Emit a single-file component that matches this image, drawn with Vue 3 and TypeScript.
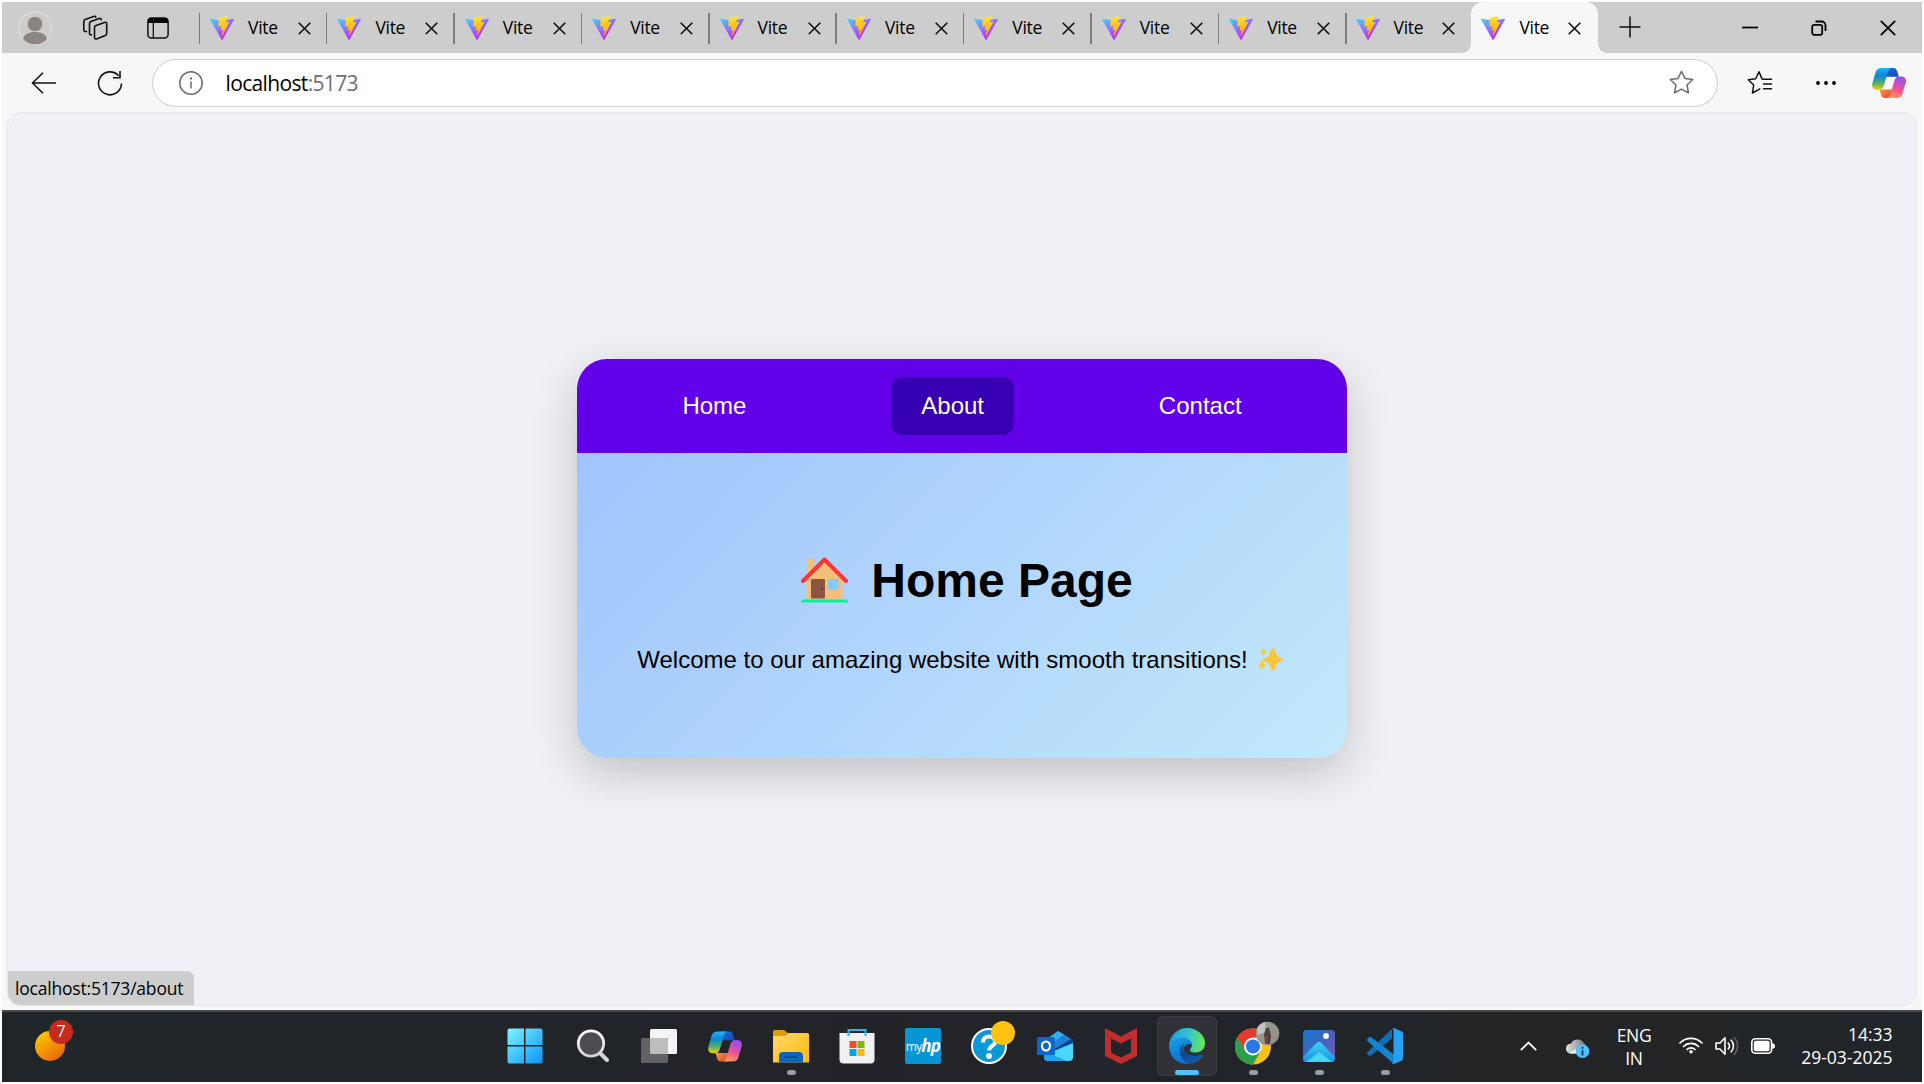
<script setup lang="ts">
interface NavItem {
  label: string
  active: boolean
}

const tabs: number[] = Array.from({ length: 11 }, (_, i) => i)
const activeTab = 10

const navItems: NavItem[] = [
  { label: 'Home', active: false },
  { label: 'About', active: true },
  { label: 'Contact', active: false },
]
</script>

<template>
  <div class="screen">
    <svg class="defs" width="0" height="0" aria-hidden="true">
      <defs>
        <linearGradient id="viteA" x1="-.8%" x2="57.6%" y1="7.6%" y2="78.4%">
          <stop offset="0" stop-color="#41d1ff" /><stop offset="1" stop-color="#bd34fe" />
        </linearGradient>
        <linearGradient id="viteB" x1="43.4%" x2="50.3%" y1="2.2%" y2="89%">
          <stop offset="0" stop-color="#ffea83" /><stop offset=".083" stop-color="#ffdd35" /><stop offset="1" stop-color="#ffa800" />
        </linearGradient>
        <linearGradient id="copA" x1="0" y1="0" x2="0" y2="1">
          <stop offset="0" stop-color="#20b4f2" /><stop offset=".35" stop-color="#0d86dc" /><stop offset=".68" stop-color="#4fae6b" /><stop offset="1" stop-color="#f3cf12" />
        </linearGradient>
        <linearGradient id="copB" x1=".3" y1="0" x2="0" y2="1">
          <stop offset="0" stop-color="#a14bea" /><stop offset=".5" stop-color="#ee5590" /><stop offset="1" stop-color="#ffab50" />
        </linearGradient>
        <linearGradient id="copC" x1="0" y1="0" x2="1" y2="1">
          <stop offset="0" stop-color="#1377dc" /><stop offset="1" stop-color="#1a3fb8" />
        </linearGradient>
        <linearGradient id="copD" x1="0" y1="0" x2="1" y2="1">
          <stop offset="0" stop-color="#f9a03a" /><stop offset="1" stop-color="#e23c3c" />
        </linearGradient>
        <symbol id="copilot" viewBox="0 0 34 30">
          <path fill="url(#copC)" d="M13 0h8c2.600 0 3.600 1.300 4.300 3.800L26.800 8.700H13z" />
          <path fill="url(#copD)" d="M20 30h-7c-2.600 0-3.600-1.600-4.200-4L7.500 21.400H20z" />
          <path fill="url(#copA)" d="M9.500 0H19.500c-2 0-2.900 1.700-3.600 4l-4 13.500c-.8 2.700-2 4.300-5 4.300H4.500C1 21.800-.5 19 .3 15.500L3.500 4.500C4.400 1.600 6 0 9.500 0z" />
          <path fill="url(#copB)" d="M24.500 30H14.800c2 0 2.900-1.700 3.600-4l4-13.200C23.200 10.100 24.400 8.600 27.400 8.600h2c3.600 0 5.200 2.800 4.300 6.200l-3.200 10.700C29.600 28.500 28 30 24.500 30z" />
        </symbol>
        <linearGradient id="win" x1="0" y1="0" x2="1" y2="1">
          <stop offset="0" stop-color="#7cf4fe" /><stop offset="1" stop-color="#0a94fa" />
        </linearGradient>
        <linearGradient id="lens" x1="0" y1="0" x2="0" y2="1">
          <stop offset="0" stop-color="#ffffff" /><stop offset="1" stop-color="#d2d4d6" />
        </linearGradient>
        <linearGradient id="folder" x1="0" y1="0" x2="1" y2="1">
          <stop offset="0" stop-color="#ffda6b" /><stop offset="1" stop-color="#fdb909" />
        </linearGradient>
        <linearGradient id="edgeTop" x1="0" y1=".4" x2="1" y2=".5">
          <stop offset="0" stop-color="#1c9ce0" /><stop offset=".5" stop-color="#34c1d8" /><stop offset="1" stop-color="#66ea4c" />
        </linearGradient>
        <linearGradient id="edgeLeft" x1="0" y1="0" x2=".4" y2="1">
          <stop offset="0" stop-color="#1da0e4" /><stop offset="1" stop-color="#0972d4" />
        </linearGradient>
        <linearGradient id="edgeDark" x1="0" y1="0" x2="1" y2="1">
          <stop offset="0" stop-color="#0d62b4" /><stop offset=".4" stop-color="#0b4a93" /><stop offset="1" stop-color="#1565b8" />
        </linearGradient>
        <linearGradient id="photoBg" x1="0" y1="0" x2="1" y2="1">
          <stop offset="0" stop-color="#0f7bd0" /><stop offset=".55" stop-color="#4a60bb" /><stop offset="1" stop-color="#8a52b0" />
        </linearGradient>
        <linearGradient id="photoHill" x1="0" y1="0" x2="0" y2="1">
          <stop offset="0" stop-color="#3ad3f6" /><stop offset="1" stop-color="#1a93e2" />
        </linearGradient>
        <linearGradient id="cloudG" x1="0" y1="0" x2="1" y2="0">
          <stop offset="0" stop-color="#e2e2e2" /><stop offset="1" stop-color="#6f7274" />
        </linearGradient>
        <linearGradient id="avatarG" x1="0" y1="0" x2="1" y2="1">
          <stop offset="0" stop-color="#9ba193" /><stop offset="1" stop-color="#8f8a86" />
        </linearGradient>
      </defs>
    </svg>

    <header class="tabstrip">
      <svg class="profile" viewBox="0 0 34 34" width="34" height="34">
        <circle cx="17" cy="17" r="16.300" fill="#cfcdca" stroke="#dedddb" stroke-width="1.300" />
        <circle cx="17" cy="13" r="7.300" fill="#8b8683" />
        <path fill="#8b8683" d="M5 28c1-4.500 5.500-7 12-7s11 2.500 12 7c-3 3.400-7 5.300-12 5.300S8 31.400 5 28z" />
      </svg>
      <svg class="workspaces" viewBox="0 0 26 26" width="26" height="26" fill="none" stroke="#111" stroke-width="1.600" stroke-linejoin="round" stroke-linecap="round">
        <path d="M13.500 10.800l9-3.400c1.400-.5 2.200 0 2.200 1.300v9.800c0 1-.5 1.700-1.500 2.100l-8.600 3.300c-1.300.4-2.100 0-2.100-1.300v-10c0-.9.300-1.500 1-1.800z" />
        <path d="M9.500 19.800c-1.200.3-2-.2-2-1.400V8.700c0-1 .5-1.700 1.400-2.100l8.200-3c1.200-.5 2 0 2.200 1.200" />
        <path d="M4.500 16.500c-1.700.4-2.700-.2-2.700-1.700V6.500c0-1 .5-1.700 1.400-2.100l8.300-3c1.200-.5 2-.1 2.300.8" />
      </svg>
      <svg class="tabmenu" viewBox="0 0 22 22" width="22" height="22">
        <rect x=".9" y=".9" width="20.200" height="20.200" rx="3.500" fill="none" stroke="#111" stroke-width="1.500" />
        <path fill="#000" d="M1 6V4a3 3 0 0 1 3-3h14a3 3 0 0 1 3 3v2z" />
        <path d="M6.300 6v15" stroke="#111" stroke-width="1.300" />
      </svg>

      <div class="tabs">
        <div v-for="i in tabs" :key="i" class="tab" :class="{ active: i === activeTab }">
          <svg class="favicon" viewBox="0 0 256 257" width="24" height="24">
            <path fill="url(#viteA)" d="M255.153 37.938L134.897 252.976c-2.483 4.440-8.862 4.466-11.382.048L.875 37.958c-2.746-4.814 1.371-10.646 6.827-9.670l120.385 21.517a6.537 6.537 0 0 0 2.322-.004l117.867-21.483c5.438-.991 9.574 4.796 6.877 9.620Z" />
            <path fill="url(#viteB)" d="M185.432.063L96.440 17.501a3.268 3.268 0 0 0-2.634 3.014l-5.474 92.456a3.268 3.268 0 0 0 3.997 3.378l24.777-5.718c2.318-.535 4.413 1.507 3.936 3.838l-7.361 36.047c-.495 2.426 1.782 4.500 4.151 3.780l15.304-4.649c2.372-.720 4.652 1.360 4.150 3.788l-11.698 56.621c-.732 3.542 3.979 5.473 5.943 2.437l1.313-2.028l72.516-144.720c1.215-2.423-.880-5.186-3.540-4.672l-25.505 4.922c-2.396.462-4.435-1.770-3.759-4.114l16.646-57.705c.677-2.350-1.370-4.583-3.769-4.113Z" />
          </svg>
          <span class="tab-title">Vite</span>
          <svg class="tab-close" viewBox="0 0 13 13" width="13" height="13"><path d="M.7.700l11.600 11.600M12.300.700L.7 12.300" stroke="#111" stroke-width="1.600" /></svg>
        </div>
      </div>

      <svg class="newtab" viewBox="0 0 22 22" width="22" height="22"><path d="M11 .5v21M.5 11h21" stroke="#111" stroke-width="1.500" /></svg>

      <div class="window-controls">
        <svg viewBox="0 0 16 16" width="16" height="16"><path d="M0 7.500h16" stroke="#000" stroke-width="1.800" /></svg>
        <svg viewBox="0 0 16 16" width="16" height="16" fill="none" stroke="#000" stroke-width="1.800">
          <rect x="1.200" y="4.800" width="10" height="10" rx="2" />
          <path d="M4.500 1.500H10.500a4 4 0 0 1 4 4v5.500" />
        </svg>
        <svg viewBox="0 0 16 16" width="16" height="16"><path d="M.8.800l14.400 14.400M15.200.800L.8 15.200" stroke="#000" stroke-width="1.800" /></svg>
      </div>
    </header>

    <div class="toolbar">
      <svg class="back" viewBox="0 0 26 22" width="26" height="22" fill="none" stroke="#111" stroke-width="1.500"><path d="M25 11H1.500M12 .8L1.500 11 12 21.200" /></svg>
      <svg class="reload" viewBox="0 0 26 26" width="26" height="26" fill="none" stroke="#111" stroke-width="1.600"><path d="M24.500 13.500A11.500 11.500 0 1 1 21.600 5.700M23 1v6.700h-7" /></svg>
      <div class="address">
        <svg class="info" viewBox="0 0 24 24" width="24" height="24"><circle cx="12" cy="12" r="11.200" fill="none" stroke="#6b6b6b" stroke-width="1.500" /><circle cx="12" cy="7.500" r="1.150" fill="#6b6b6b" /><path d="M12 10.500v7" stroke="#6b6b6b" stroke-width="1.500" /></svg>
        <span class="url">localhost<span class="port">:5173</span></span>
        <svg class="star" viewBox="0 0 24 24" width="25" height="25" fill="none" stroke="#6b6b6b" stroke-width="1.400" stroke-linejoin="round"><path d="M12 1.200l3.300 6.900 7.500 1-5.500 5.300 1.400 7.500L12 18.300l-6.700 3.600 1.400-7.500L1.200 9.100l7.500-1z" /></svg>
      </div>
      <svg class="favorites" viewBox="0 0 26 25" width="26" height="25" fill="none" stroke="#111" stroke-width="1.500" stroke-linejoin="round" stroke-linecap="round">
        <path d="M16.500 9.200l-1.500-.3L12 1.700 8.700 8.800l-7.400 1 5.400 5.200-1.300 8 6.600-3.700.8-.4M16.500 9.300h8M16.500 14h8M16.500 18.800h8" />
      </svg>
      <svg class="more" viewBox="0 0 20 4" width="20" height="4"><circle cx="2" cy="2" r="1.900" /><circle cx="10" cy="2" r="1.900" /><circle cx="18" cy="2" r="1.900" /></svg>
      <svg class="copilot-btn" width="34" height="32"><use href="#copilot" width="34" height="32" /></svg>
    </div>

    <main class="viewport-wrap">
      <div class="viewport">
        <section class="card">
          <nav class="nav">
            <a v-for="item in navItems" :key="item.label" class="nav-link" :class="{ hovered: item.active }">{{ item.label }}</a>
          </nav>
          <div class="page">
            <h1>
              <svg class="house" viewBox="0 0 47 46" width="47" height="46">
                <path fill="#f4bf7d" d="M6.500 2.500Q6.500 1.500 7.500 1.500H12.500Q13.500 1.500 13.500 2.500V11L23.500 3 41.500 22V43H5.500V22l1-3z" />
                <path fill="none" stroke="#ff3434" stroke-width="4" stroke-linecap="round" stroke-linejoin="round" d="M2 24L23.500 2.500 45 24" />
                <rect x="10" y="22" width="14" height="19.500" rx="1" fill="#8c5543" />
                <circle cx="21" cy="31.500" r="1" fill="#4c2b25" />
                <rect x="27" y="22" width="10.500" height="10.500" rx=".8" fill="#82cafc" />
                <path fill="#06f294" d="M0 45.500Q0 42.500 3 42.500H44Q47 42.500 47 45.500z" />
              </svg>
              <span>Home Page</span>
            </h1>
            <p>
              <span>Welcome to our amazing website with smooth transitions!</span>
              <svg class="sparkles" viewBox="0 0 25 23" width="25" height="23" fill="#fbc53d">
                <path d="M15 0Q16.500 0 17.300 3 18.500 8.500 23 9.800 25 10.500 25 11.500T23 13.200Q18.500 14.500 17.300 20 16.500 23 15 23T12.700 20Q11.500 14.500 7 13.200 5 12.500 5 11.500T7 9.800Q11.500 8.500 12.700 3 13.500 0 15 0z" />
                <path d="M5.500.5Q6 3 8.500 3.700 6 4.400 5.500 7 5 4.400 2.500 3.700 5 3 5.500.500z" stroke="#fbc53d" stroke-width=".8" />
                <path d="M4 12.500Q4.600 16 7.500 17 4.600 18 4 21.500 3.400 18 .5 17 3.400 16 4 12.500z" stroke="#fbc53d" stroke-width=".8" />
              </svg>
            </p>
          </div>
        </section>
        <div class="status">localhost:5173/about</div>
      </div>
    </main>

    <footer class="taskbar">
      <div class="widgets">
        <svg viewBox="0 0 40 42" width="40" height="42">
          <defs><linearGradient id="sun" x1=".1" y1="0" x2=".8" y2="1"><stop offset="0" stop-color="#ffd000" /><stop offset="1" stop-color="#e86208" /></linearGradient></defs>
          <circle cx="15" cy="26" r="15" fill="url(#sun)" />
          <circle cx="26" cy="12" r="12" fill="#c42b1c" />
        </svg>
        <span class="badge">7</span>
      </div>

      <div class="apps">
        <div class="app start">
          <svg viewBox="0 0 36 36" width="36" height="36"><path fill="url(#win)" d="M.500 2.500a2 2 0 0 1 2-2H17V17H.5zM18.500.500H33.500a2 2 0 0 1 2 2V17h-17zM.500 18.500H17v17H2.500a2 2 0 0 1-2-2zM18.500 18.500h17v15a2 2 0 0 1-2 2h-15z" /></svg>
        </div>
        <div class="app">
          <svg viewBox="0 0 36 36" width="36" height="36"><path d="M25 25l7 7" stroke="#d2d4d6" stroke-width="4" stroke-linecap="round" /><circle cx="16" cy="15.500" r="12.700" fill="#4b4d50" stroke="url(#lens)" stroke-width="2.800" /></svg>
        </div>
        <div class="app">
          <svg viewBox="0 0 36 36" width="36" height="36"><rect x="9" y="1" width="27" height="25" rx="1.500" fill="#f4f4f4" /><rect x="0" y="10" width="27" height="25" rx="1.500" fill="#626262" /><path fill="#bdbdbd" d="M9 10h16.500q1.500 0 1.500 1.500V26H10.500Q9 26 9 24.500z" /></svg>
        </div>
        <div class="app">
          <svg width="34" height="31"><use href="#copilot" width="34" height="31" /></svg>
        </div>
        <div class="app">
          <svg viewBox="0 0 36 36" width="36" height="36"><path fill="#dd9c09" d="M0 3.500Q0 2 1.500 2H11l4 3-3.500 4H0z" /><path fill="url(#folder)" d="M0 8h11.500L15.500 5H34.500Q36 5 36 6.500V34.500H0z" /><path fill="#0a66bd" d="M6 34.500V28q0-4 4-4H26q4 0 4 4v6.500z" /><path d="M11 29H25" stroke="#0b4a8c" stroke-width="1.500" /></svg>
          <i class="running"></i>
        </div>
        <div class="app">
          <svg viewBox="0 0 36 36" width="36" height="36"><path fill="none" stroke="#2fb6f0" stroke-width="2" d="M9.500 8V2h17v6" /><path fill="#f1f1f1" d="M.500 5H35.500V31.500a4 4 0 0 1-4 4H4.500a4 4 0 0 1-4-4z" /><path d="M9.500 5v3M26.500 5v3" stroke="#2fb6f0" stroke-width="2" /><path fill="#f25022" d="M10.500 13h7v7h-7z" /><path fill="#7fba00" d="M18.500 13h7v7h-7z" /><path fill="#00a4ef" d="M10.500 21h7v7h-7z" /><path fill="#ffb900" d="M18.500 21h7v7h-7z" /></svg>
        </div>
        <div class="app">
          <div class="myhp"><span>my</span><b>hp</b></div>
        </div>
        <div class="app">
          <svg class="help" viewBox="0 0 45 44" width="45" height="44"><circle cx="18" cy="25" r="17" fill="#0899d8" stroke="#fff" stroke-width="2" /><path d="M12 21.500c0-4 2.500-6 6-6s6 2 6 5.500c0 4-6 4-6 8.500" fill="none" stroke="#fff" stroke-width="4" /><circle cx="18" cy="35" r="2.900" fill="#fff" /><circle cx="32" cy="12" r="12" fill="#ffc20e" /></svg>
        </div>
        <div class="app">
          <svg viewBox="0 0 36 36" width="36" height="36"><path fill="#1785d5" d="M7 13L21 3 36 12V24H7z" /><path fill="#35aef0" d="M10 11L21 3l6 3.500L14 16z" /><path fill="#0a408d" d="M14 20L34 10l2 2v4L18 27z" /><path fill="#1e7fd8" d="M14 17L29 8l5 3-18 11z" /><path fill="#48d6fb" d="M7 27L36 15V29a4 4 0 0 1-4 4H11a4 4 0 0 1-4-4z" /><path fill="#1fa3ea" d="M7 27h9l14 6H11a4 4 0 0 1-4-4z" /><rect x="0" y="9" width="18" height="18" rx="1.500" fill="#0c66cc" /><ellipse cx="9" cy="18" rx="4" ry="4.500" fill="none" stroke="#fff" stroke-width="2.200" /></svg>
        </div>
        <div class="app">
          <svg viewBox="0 0 36 36" width="36" height="36"><path fill="#bf2e2c" fill-rule="evenodd" d="M2 0L18 8.500 34 0V28L18 36 2 28zM8 10.500V24.500L18 29.500l10-5V10.500l-10 5z" /></svg>
        </div>
        <div class="app current">
          <svg viewBox="0 0 36 36" width="36" height="36">
            <path fill="url(#edgeLeft)" d="M0 17C1 11 6 8 13 8c7 0 10 4 10 9-4-3-9 0-8 6 1 5 5 9 9 11.500C12 39 0 31 0 17z" />
            <path fill="url(#edgeTop)" d="M0 17C1 7 9 0 18 0c10 0 18 7 18 15 0 6-4 9.500-9 9.500-4 0-6-1-6-2.600 0-1.400 2-2.200 2-5.200 0-4-4-7.200-10-7.200C7 9.500 2 12.500 0 17z" />
            <path fill="url(#edgeDark)" d="M15.500 15.500C11.500 17 9.500 21 11 26c2 6.500 8 10.500 13 9.300 4.500-1.200 8-4.300 9.800-7.800.6-1.100-.3-1.300-1-.9-2 1.100-4 1.400-6.300 1.400-7.500 0-12-4-12-8.500 0-1.700.5-3 1-4z" />
          </svg>
          <i class="running wide"></i>
        </div>
        <div class="app">
          <svg class="chrome" viewBox="0 0 45 44" width="45" height="44">
            <circle cx="18" cy="25.500" r="18" fill="#fbc116" />
            <path fill="#e33b2e" d="M2.400 16.500a18 18 0 0 1 31.200 0H18v9l-7.800 4.500z" />
            <path fill="#2c9f4b" d="M2.400 16.500a18 18 0 0 0 15.600 27l7.800-13.500-7.800-4.500-7.800 4.500z" />
            <circle cx="18" cy="25.500" r="9" fill="#fff" /><circle cx="18" cy="25.500" r="7.100" fill="#2b78ea" />
            <circle cx="32.500" cy="12.500" r="11.800" fill="url(#avatarG)" />
            <path fill="#c0c2bc" d="M22 8a12 12 0 0 1 8-7l1 10-8 3z" /><path fill="#4c4141" d="M31 6q2-2 3 1l2 7-1 9h-5l-1-9z" /><path fill="#9b3c36" d="M30 14h2v9h-2z" /><circle cx="32" cy="5.500" r="1.500" fill="#b99c8d" />
          </svg>
          <i class="running"></i>
        </div>
        <div class="app">
          <svg viewBox="0 0 32 32" width="32" height="32"><rect width="32" height="32" rx="3.500" fill="url(#photoBg)" /><path fill="url(#photoHill)" d="M.5 26.500L13.500 13q2.500-2.500 5 0L31.500 26.500V29a3 3 0 0 1-2.500 3H3.500A3.500 3.500 0 0 1 0 28.500z" /><path fill="#5ce4fc" d="M3 32l11.500-8.500q1.800-1.300 3.600 0L29 32z" opacity=".75" /><circle cx="23" cy="6" r="2.900" fill="#fff" /></svg>
          <i class="running"></i>
        </div>
        <div class="app">
          <svg viewBox="0 0 36 36" width="36" height="36"><path fill="#0a70b8" d="M0 24.500L25 1v9.500L4 27.500q-1.200.5-2 0L.3 26q-.6-.8-.3-1.500z" /><path fill="#1484cf" d="M0 11.500L2 9.300q1-.8 2.200 0L27 26.500V36L.3 13z" /><path fill="#29a1f1" d="M27 0l8 3.500q1 .5 1 1.700V30.800q0 1.200-1 1.700L27 36q-1.500 0-2-1 1.500.5 1.500-1.300V2.300Q26.500.8 25 1q.8-1 2-1z" /></svg>
          <i class="running"></i>
        </div>
      </div>

      <div class="tray">
        <svg class="chevron" viewBox="0 0 17 10" width="17" height="10" fill="none" stroke="#fff" stroke-width="1.800"><path d="M.8 9.200L8.500 1.500l7.700 7.700" /></svg>
        <svg class="cloud" viewBox="0 0 25 20" width="25" height="20"><path fill="url(#cloudG)" d="M5 15.500a5 5 0 0 1 0-9.800h1A7.300 7.300 0 0 1 19 5.500c2 .5 3 2.500 2 10z" /><path fill="#f0f0f0" d="M4 15.500l7-5 4 5z" /><circle cx="17.500" cy="13.200" r="6.800" fill="#4cc2ff" /><circle cx="17.500" cy="9.800" r="1.100" fill="#10344a" /><path d="M17.500 12v5.500" stroke="#10344a" stroke-width="1.800" /></svg>
        <div class="lang"><span>ENG</span><span>IN</span></div>
        <svg class="wifi" viewBox="0 0 24 18" width="24" height="18" fill="none" stroke="#fff" stroke-width="1.700" stroke-linecap="round"><path d="M1 7a15.500 15.500 0 0 1 22 0M4.500 10.500a10.600 10.600 0 0 1 15 0M8 13.500a5.800 5.800 0 0 1 8 0" /><circle cx="12" cy="15.800" r="1.300" fill="#fff" stroke-width="1" /></svg>
        <svg class="speaker" viewBox="0 0 24 20" width="24" height="20" fill="none" stroke="#fff" stroke-width="1.600" stroke-linejoin="round" stroke-linecap="round"><path d="M1 7h4l5-5.200v16.400L5 13H1z" /><path d="M13.200 7a4.500 4.500 0 0 1 0 6M16.200 4.200a8.500 8.500 0 0 1 0 11.600" /><path d="M19.200 1.500a12.500 12.500 0 0 1 0 17" stroke="#5d6063" /></svg>
        <svg class="battery" viewBox="0 0 24 16" width="24" height="16"><rect x=".8" y=".8" width="19.800" height="14.400" rx="3.500" fill="none" stroke="#fff" stroke-width="1.600" /><rect x="2.800" y="2.800" width="15.800" height="10.400" rx="1.800" fill="#fff" /><path fill="#fff" d="M21 5.500h1.300q1.700 0 1.700 2.500t-1.700 2.500H21z" /></svg>
        <div class="clock"><span>14:33</span><span class="date">29-03-2025</span></div>
      </div>
    </footer>
  </div>
</template>

<style>
body {
  margin: 0;
  overflow: hidden;
  background: #fff;
}
</style>

<style scoped>
.screen {
  box-sizing: border-box;
  width: 1924px;
  height: 1084px;
  padding: 2px;
  display: flex;
  flex-direction: column;
  background: #fff;
  font-family: "Open Sans", "Noto Sans", sans-serif;
  color: #000;
  overflow: hidden;
}
svg {
  display: block;
  flex: none;
}
.defs {
  position: absolute;
}

/* Tab strip */
.tabstrip {
  flex: none;
  display: flex;
  height: 51px;
  background: #cdcdcd;
}
.profile { margin: 9px 0 0 16px; }
.workspaces { margin: 13px 0 0 30px; }
.tabmenu { margin: 15px 0 0 39px; }
.tabs {
  display: flex;
  margin-left: 28px;
}
.tab {
  position: relative;
  display: flex;
  box-sizing: border-box;
  width: 127.400px;
  height: 51px;
  padding-left: 13px;
}
.tab::before {
  content: "";
  position: absolute;
  left: 1.500px;
  top: 11px;
  width: 1.500px;
  height: 31px;
  background: #7d7d7d;
}
.tab.active {
  padding-left: 10.500px;
  background: #f7f7f7;
  border-radius: 12px 12px 0 0;
}
.tab.active::before,
.tab.active::after {
  content: "";
  position: absolute;
  left: -9px;
  top: 42px;
  width: 9px;
  height: 9px;
  background: radial-gradient(circle at 0 0, transparent 8.500px, #f7f7f7 9px);
}
.tab.active::after {
  left: auto;
  right: -9px;
  background: radial-gradient(circle at 100% 0, transparent 8.500px, #f7f7f7 9px);
}
.favicon { margin-top: 14px; }
.tab-title {
  width: 36px;
  margin: 13px 0 0 14px;
  font-size: 17.500px;
  line-height: 25px;
  letter-spacing: -0.300px;
}
.tab-close { margin: 19.500px 0 0 14px; }
.tab:nth-child(10) { padding-left: 12px; }
.tab:nth-child(n + 10) .tab-close { margin-left: 12.500px; }
.newtab { margin: 14px 0 0 21px; }
.window-controls {
  display: flex;
  margin: 18px 26.500px 0 auto;
  gap: 53px;
}

/* Toolbar */
.toolbar {
  flex: none;
  display: flex;
  align-items: center;
  height: 59px;
  background: #f7f7f7;
}
.back { margin-left: 29px; }
.reload { margin-left: 40px; }
.address {
  box-sizing: border-box;
  display: flex;
  align-items: center;
  width: 1566px;
  height: 48px;
  margin-left: 29px;
  padding: 0 23.500px 0 26px;
  border: 1.500px solid #cfcfcf;
  border-radius: 24px;
  background: #fff;
}
.url {
  margin: 0 auto 0 22.500px;
  font-size: 21px;
  line-height: 30px;
  letter-spacing: -0.650px;
}
.port { color: #6e6e6e; }
.favorites { margin-left: 29px; }
.more { margin-left: 43px; }
.copilot-btn { margin-left: 36px; }

/* Browser page */
.viewport-wrap {
  flex: none;
  box-sizing: border-box;
  height: 898px;
  padding: 0 5px 4px;
  background: #f7f7f7;
}
.viewport {
  position: relative;
  box-sizing: border-box;
  display: flex;
  flex-direction: column;
  align-items: center;
  height: 894px;
  padding-top: 246px;
  border: 1px solid #e6e6e8;
  border-radius: 14px;
  background: #f0f1f6;
  overflow: hidden;
}
.card {
  width: 770px;
  height: 399px;
  border-radius: 30px;
  box-shadow: 0 15px 45px rgba(0, 0, 0, 0.2);
  overflow: hidden;
  font-family: "Liberation Sans", Arial, sans-serif;
}
.nav {
  box-sizing: border-box;
  display: flex;
  justify-content: space-around;
  height: 94px;
  padding: 18px;
  background: #6200ea;
}
.nav-link {
  padding: 0 30px;
  border-radius: 12px;
  font-size: 24px;
  line-height: 58px;
  color: #fff;
}
.nav-link.hovered { background: #3700b3; }
.page {
  display: flex;
  flex-direction: column;
  align-items: center;
  height: 305px;
  background: linear-gradient(135deg, #a1c4fd, #c2e9fb);
}
h1 {
  display: flex;
  align-items: center;
  height: 56px;
  margin: 100px 0 0;
  padding-left: 10px;
  gap: 23px;
  font-size: 48px;
  line-height: 56px;
}
.house { margin-top: -3px; }
p {
  display: flex;
  align-items: center;
  height: 28px;
  margin: 37px 0 0;
  padding-right: 4px;
  gap: 10px;
  font-size: 24px;
  line-height: 28px;
  white-space: nowrap;
}
.sparkles { margin-top: -1px; }
.status {
  position: absolute;
  left: -1px;
  bottom: -1px;
  box-sizing: border-box;
  width: 187px;
  height: 35px;
  padding-left: 8px;
  border-radius: 0 7px 0 14px;
  background: #cdcdcd;
  font-size: 17.500px;
  line-height: 35px;
  letter-spacing: -0.200px;
  white-space: nowrap;
}

/* Taskbar */
.taskbar {
  position: relative;
  flex: none;
  box-sizing: border-box;
  display: flex;
  height: 72px;
  border-top: 2px solid #484a4c;
  background: linear-gradient(90deg, #20252a, #212529 25%, #222329 45%, #20252a 70%, #242424 80%, #21262a);
  color: #fff;
}
.widgets {
  position: relative;
  width: 40px;
  margin: 8px 0 0 33px;
}
.badge {
  position: absolute;
  left: 14px;
  top: 0;
  width: 24px;
  font-size: 16px;
  line-height: 23px;
  text-align: center;
}
.apps {
  display: flex;
  margin-left: 417px;
}
.app {
  position: relative;
  display: flex;
  align-items: center;
  justify-content: center;
  width: 60px;
  height: 60px;
  margin: 4px 3px 0;
  border-radius: 6px;
}
.app.start { margin-right: 5px; }
.current {
  background: #303237;
  box-shadow: inset 0 0 0 1px #3a3c40;
}
.running {
  position: absolute;
  left: 25.500px;
  bottom: 1px;
  width: 9px;
  height: 5px;
  border-radius: 3px;
  background: #9b9c9e;
}
.running.wide {
  left: 18px;
  width: 24px;
  background: #4cc2ff;
}
.help,
.chrome {
  margin: -7px 0 0 9px;
}
.myhp {
  display: flex;
  align-items: center;
  justify-content: center;
  width: 36px;
  height: 36px;
  border-radius: 2px;
  background: #0696d5;
  font-size: 12px;
  letter-spacing: -0.800px;
}
.myhp b {
  font-size: 17px;
  font-style: italic;
  line-height: 18px;
}
.tray {
  display: flex;
  margin-left: 102px;
}
.chevron { margin-top: 29px; }
.cloud { margin: 26px 0 0 28px; }
.lang,
.clock {
  display: flex;
  flex-direction: column;
  font-size: 17.500px;
  line-height: 23px;
  letter-spacing: -0.300px;
}
.lang {
  align-items: center;
  width: 40px;
  margin: 12px 0 0 24px;
}
.wifi { margin: 24px 0 0 25px; }
.speaker { margin: 24px 0 0 12px; }
.battery { margin: 26px 0 0 12px; }
.clock {
  align-items: flex-end;
  width: 100px;
  margin: 11px 0 0 17.500px;
  letter-spacing: 0;
}
</style>
